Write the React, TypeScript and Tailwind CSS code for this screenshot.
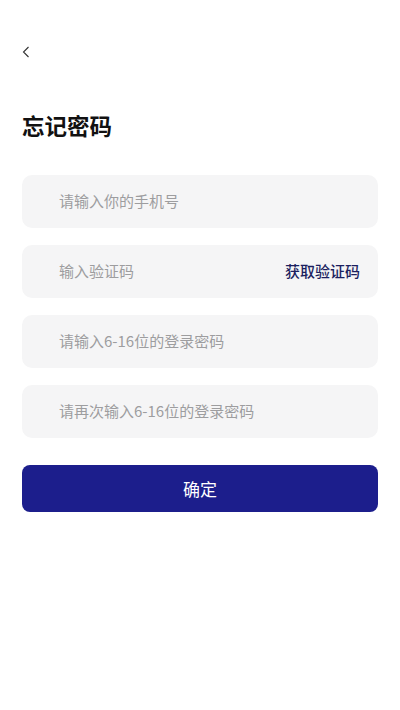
import React, { useState } from 'react';

const font = { fontFamily: '"Noto Sans CJK SC", "Noto Sans", sans-serif' };

function Field({ placeholder, right }: { placeholder: string; right?: React.ReactNode }) {
  return (
    <div className="flex h-[53px] items-center rounded-[10px] bg-[#f5f5f6] pl-[37px] pr-[18px]">
      <input
        placeholder={placeholder}
        className="min-w-0 flex-1 bg-transparent text-[15px] text-[#333] outline-none placeholder:text-[#9d9d9f]"
        style={font}
      />
      {right}
    </div>
  );
}

export default function App() {
  const [phone] = useState('');

  return (
    <div className="min-h-[710px] w-full bg-white" style={font}>
      <div className="px-[22px] pt-[45px]">
        <button className="flex h-[14px] w-[12px] items-center" aria-label="back">
          <svg width="8" height="12" viewBox="0 0 8 12" fill="none">
            <path d="M6.5 1 L1.5 6 L6.5 11" stroke="#333" strokeWidth="1.1" />
          </svg>
        </button>

        <h1 className="mt-[51px] text-[22.5px] font-bold leading-[30px] text-[#111]">忘记密码</h1>

        <div className="mt-[35px] flex flex-col gap-[17px]">
          <Field placeholder="请输入你的手机号" />
          <Field
            placeholder="输入验证码"
            right={<button className="text-[15px] font-medium text-[#1c1f5f]">获取验证码</button>}
          />
          <Field placeholder="请输入6-16位的登录密码" />
          <Field placeholder="请再次输入6-16位的登录密码" />
        </div>

        <button
          className="mt-[27px] flex h-[47px] w-full items-center justify-center rounded-[8px] bg-[#1c1e8c] text-[17px] text-white"
          data-phone={phone}
        >
          确定
        </button>
      </div>
    </div>
  );
}
